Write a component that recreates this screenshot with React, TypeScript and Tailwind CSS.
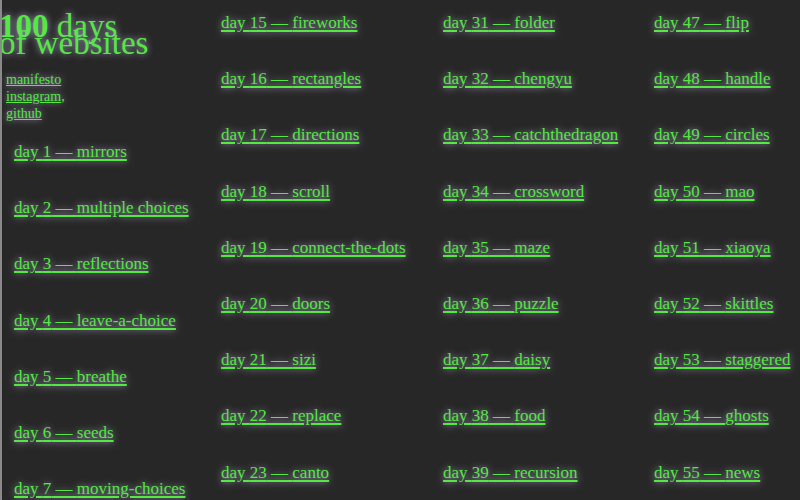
import React from "react";

const cols: [number, string][][] = [
  [
    [15, "fireworks"],
    [16, "rectangles"],
    [17, "directions"],
    [18, "scroll"],
    [19, "connect-the-dots"],
    [20, "doors"],
    [21, "sizi"],
    [22, "replace"],
    [23, "canto"],
  ],
  [
    [31, "folder"],
    [32, "chengyu"],
    [33, "catchthedragon"],
    [34, "crossword"],
    [35, "maze"],
    [36, "puzzle"],
    [37, "daisy"],
    [38, "food"],
    [39, "recursion"],
  ],
  [
    [47, "flip"],
    [48, "handle"],
    [49, "circles"],
    [50, "mao"],
    [51, "xiaoya"],
    [52, "skittles"],
    [53, "staggered"],
    [54, "ghosts"],
    [55, "news"],
  ],
];

const first: [number, string][] = [
  [1, "mirrors"],
  [2, "multiple choices"],
  [3, "reflections"],
  [4, "leave-a-choice"],
  [5, "breathe"],
  [6, "seeds"],
  [7, "moving-choices"],
];

function Item({ n, name }: { n: number; name: string }) {
  return (
    <div className="h-[56.2px] shrink-0 leading-[20px] text-[17px] whitespace-nowrap">
      <a href="#" className="underline decoration-[1.5px] underline-offset-[2px]">
        day {n} — {name}
      </a>
    </div>
  );
}

export default function App() {
  return (
    <div
      className="w-[800px] h-[500px] overflow-hidden bg-[#272727] border-l-2 border-[#8a8a8a] flex text-[#55e843] [text-shadow:0_0_7px_rgba(195,195,230,0.8)]"
      style={{ fontFamily: '"Liberation Serif", serif' }}
    >
      <div className="w-[219px] shrink-0 flex flex-col">
        <div className="mt-[18px] -ml-[3px] text-[33px] leading-[17px] whitespace-nowrap">
          <div>
            <span className="font-bold">100</span> days
          </div>
          <div>of websites</div>
        </div>
        <div className="mt-[19px] pl-[4px] text-[14px] leading-[17px]">
          <div>
            <a href="#" className="underline">manifesto</a>
          </div>
          <div>
            <a href="#" className="underline">instagram</a>,
          </div>
          <div>
            <a href="#" className="underline">github</a>
          </div>
        </div>
        <div className="mt-[20px] pl-[12px] flex flex-col">
          {first.map(([n, name]) => (
            <Item key={n} n={n} name={name} />
          ))}
        </div>
      </div>
      <div className="w-[222px] shrink-0 pt-[13px] flex flex-col">
        {cols[0].map(([n, name]) => (
          <Item key={n} n={n} name={name} />
        ))}
      </div>
      <div className="w-[211px] shrink-0 pt-[13px] flex flex-col">
        {cols[1].map(([n, name]) => (
          <Item key={n} n={n} name={name} />
        ))}
      </div>
      <div className="w-[146px] shrink-0 pt-[13px] flex flex-col">
        {cols[2].map(([n, name]) => (
          <Item key={n} n={n} name={name} />
        ))}
      </div>
    </div>
  );
}
